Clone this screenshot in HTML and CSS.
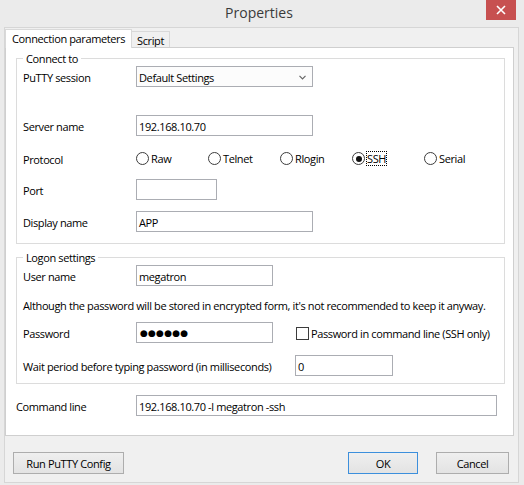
FILE: index.html
```html
<!DOCTYPE html>
<html>
<head>
<meta charset="utf-8">
<title>Properties</title>
<link rel="stylesheet" href="styles.css">
</head>
<body>
<div class="window">
  <div class="titlebar">
    <span class="title">Properties</span>
    <div class="close"><svg width="10" height="10" viewBox="0 0 10 10"><path d="M1 1L9 9M9 1L1 9" stroke="#fff" stroke-width="1.6" fill="none"/></svg></div>
  </div>
  <div class="client">
    <div class="tabs">
      <div class="tab tab-active">Connection parameters</div>
      <div class="tab tab-script">Script</div>
    </div>
    <div class="panel">
      <fieldset class="group group-connect">
        <legend>Connect to</legend>
        <div class="row">
          <span class="lbl">PuTTY session</span>
          <div class="field select w-wide"><span>Default Settings</span><svg class="chev" width="7" height="5" viewBox="0 0 7 5"><path d="M0.5 0.8L3.5 3.8L6.5 0.8" stroke="#666" stroke-width="1.2" fill="none"/></svg></div>
        </div>
        <div class="row r-server">
          <span class="lbl">Server name</span>
          <div class="field w-wide">192.168.10.70</div>
        </div>
        <div class="row r-proto">
          <span class="lbl">Protocol</span>
          <div class="radios">
            <span class="radio"><span class="circle"></span><span>Raw</span></span>
            <span class="radio"><span class="circle"></span><span>Telnet</span></span>
            <span class="radio"><span class="circle"></span><span>Rlogin</span></span>
            <span class="radio"><span class="circle checked"></span><span class="focus">SSH</span></span>
            <span class="radio"><span class="circle"></span><span>Serial</span></span>
          </div>
        </div>
        <div class="row r-port">
          <span class="lbl">Port</span>
          <div class="field w-port"></div>
        </div>
        <div class="row r-display">
          <span class="lbl">Display name</span>
          <div class="field w-wide">APP</div>
        </div>
      </fieldset>
      <fieldset class="group group-logon">
        <legend>Logon settings</legend>
        <div class="row">
          <span class="lbl">User name</span>
          <div class="field w-user">megatron</div>
        </div>
        <div class="row row-text r-note">Although the password will be stored in encrypted form, it's not recommended to keep it anyway.</div>
        <div class="row r-pass">
          <span class="lbl">Password</span>
          <div class="field w-user"><span class="dots">●●●●●●</span></div>
          <span class="check"></span>
          <span class="check-lbl">Password in command line (SSH only)</span>
        </div>
        <div class="row r-wait">
          <span class="lbl lbl-wait">Wait period before typing password (in milliseconds)</span>
          <div class="field w-wait">0</div>
        </div>
      </fieldset>
      <div class="row r-cmd">
        <span class="lbl lbl-cmd">Command line</span>
        <div class="field w-cmd">192.168.10.70 -l megatron -ssh</div>
      </div>
    </div>
    <div class="footer">
      <div class="btn btn-run">Run PuTTY Config</div>
      <div class="btn btn-ok">OK</div>
      <div class="btn btn-cancel">Cancel</div>
    </div>
  </div>
</div>
</body>
</html>
```
FILE: styles.css
```css
*{box-sizing:border-box}
html,body{margin:0;padding:0}
body{width:524px;height:485px;overflow:hidden;background:#ebebeb;font:11px/15px "Open Sans",sans-serif;letter-spacing:-0.38px;color:#000}
.window{width:524px;height:485px;display:flex;flex-direction:column;position:relative}
.titlebar{height:27px;flex:none;display:flex;align-items:center;justify-content:center;padding:0 6px 2px 0}
.title{font-size:14px;letter-spacing:0;color:#3a3a3a}
.close{position:absolute;top:0;left:486px;width:30px;height:20px;background:#c75050;display:flex;align-items:center;justify-content:center}
.close svg{display:block}
.client{margin-left:4px;width:515px;height:456px;flex:none;background:#f0f0f0;border:1px solid #d6d6d6;display:flex;flex-direction:column}
.tabs{height:19px;padding-top:1px;flex:none;display:flex;align-items:flex-end}
.tab{border:1px solid #d9d9d9;border-bottom:none;white-space:nowrap}
.tab-active{width:127px;height:19px;margin-bottom:-1px;background:#fff;padding:1px 0 0 6px;position:relative;z-index:1}
.tab-script{width:39px;height:16px;margin-left:-1px;background:#f0f0f0;text-align:center;padding-top:1px}
.panel{width:509px;height:389px;flex:none;background:#fff;border:1px solid #cfcfcf}
.group{margin:3px 8px 0 10px;padding:0 0 11px 6px;border:1px solid #dcdcdc;min-width:0}
.group legend{padding:0 3px;margin:0;line-height:15px}
.group-logon{margin-top:6px;padding-bottom:7px}
.row{display:flex;align-items:center;height:21px;white-space:nowrap}
.r-server{margin-top:28px}
.r-proto{margin-top:12px}
.r-port{margin-top:10px}
.r-display{margin-top:11px}
.r-note{margin-top:12px;height:15px}
.r-pass{margin-top:9px}
.r-wait{margin-top:12px}
.r-cmd{margin:11px 0 0 10px}
.lbl{width:113px;flex:none;padding-top:2px}
.lbl-wait{width:272px}
.lbl-cmd{width:120px}
.field{height:21px;flex:none;border:1px solid #abadb3;background:#fff;padding:1px 2px 0;display:flex;align-items:center;overflow:hidden}
.w-wide{width:177px}
.w-port{width:81px}
.w-user{width:137px}
.w-wait{width:98px}
.w-cmd{width:361px}
.select{justify-content:space-between;padding-right:6px;background:#fcfcfc}
.chev{display:block;margin-top:1px}
.radios{display:grid;grid-template-columns:repeat(5,72px)}
.radio{display:flex;align-items:center;gap:2px}
.circle{width:13px;height:13px;border-radius:50%;border:1px solid #3c3c3c;background:#fff;display:flex;align-items:center;justify-content:center}
.checked::after{content:"";width:6px;height:6px;border-radius:50%;background:#111}
.focus{outline:1px dotted #000;outline-offset:0;line-height:13px}
.dots{font:9px "DejaVu Sans",sans-serif;letter-spacing:0.2px;padding-left:1px}
.check{width:13px;height:13px;margin:2px 0 0 23px;border:1px solid #3c3c3c;background:#fff;flex:none}
.check-lbl{margin-left:2px;padding-top:2px}
.footer{flex:1;display:flex;align-items:flex-start;padding:16px 9px 0 8px}
.btn{height:22px;border:1px solid #adadad;background:linear-gradient(#efefef,#e3e3e3);display:flex;align-items:center;justify-content:center;padding-top:1px}
.btn-run{width:111px}
.btn-ok{width:70px;margin-left:auto;border-color:#3c8fdc}
.btn-cancel{width:73px;margin-left:18px}
```
